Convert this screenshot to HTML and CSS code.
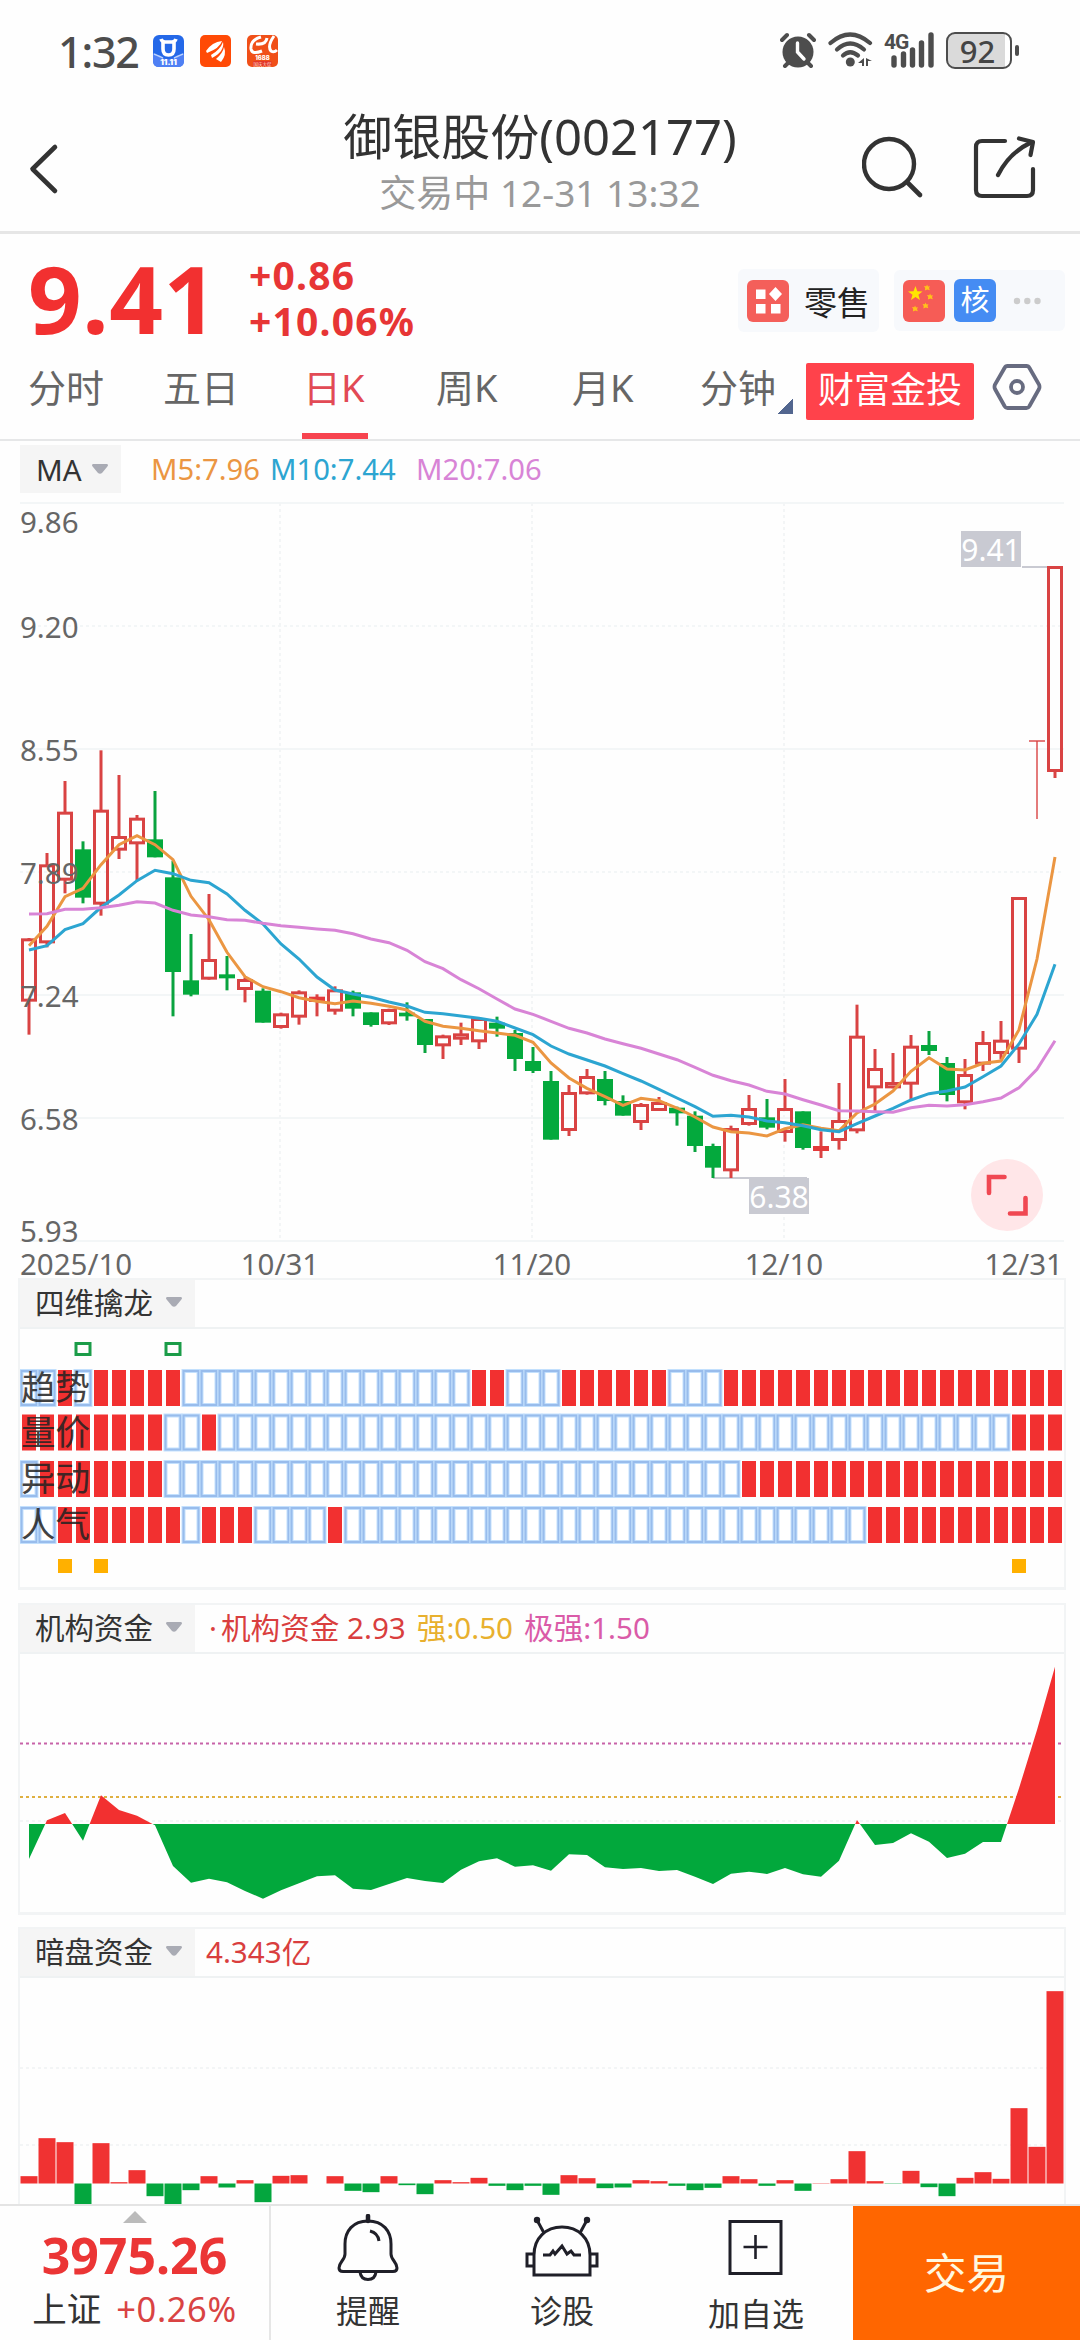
FILE: index.html
```html
<!DOCTYPE html>
<html lang="zh-CN">
<head>
<meta charset="utf-8">
<title>御银股份(002177)</title>
<link rel="stylesheet" href="styles.css">
</head>
<body>
<div class="status">
  <span class="clock">1:32</span>
  <div class="apps">
    <svg width="31" height="32" viewBox="0 0 31 32"><rect width="31" height="32" rx="6" fill="#2468e8"/><path d="M0 18Q8 24 15.500 24T31 18V26Q31 32 25 32H6Q0 32 0 26Z" fill="#4f80f4"/><path d="M1 19Q8 22 10 23M30 19Q23 22 21 23" stroke="#bcd3ff" stroke-width="1.500" fill="none"/><path d="M8 4Q9 7 12 7H19Q22 7 23 4M10 7V14Q10 20 15.500 20T21 14V7" stroke="#fff" stroke-width="3.600" fill="none"/><text x="15.500" y="30" class="app-a">11.11</text></svg>
    <svg width="31" height="32" viewBox="0 0 31 32"><rect width="31" height="32" rx="5" fill="#ff4a06"/><path d="M6 16Q12 7 22 6Q20 13 7 18ZM11 20Q20 15 23 7Q25 16 12 23ZM16 24Q23 18 24 12Q27 20 21 27Z" fill="#fff"/></svg>
    <svg width="31" height="32" viewBox="0 0 31 32"><rect width="31" height="32" rx="5" fill="#f04f18"/><path d="M14 2Q3 5 4 14Q5 20 15 16M9 9Q19 10 20 3M27 1Q20 11 24 16Q27 18 30 15" stroke="#fff" stroke-width="3" fill="none"/><text x="15.500" y="24.500" class="app-b">1688</text><rect x="6" y="26" width="19" height="5" rx="2" fill="#e2372b"/><text x="15.500" y="30.500" class="app-c">国庆大促</text></svg>
  </div>
  <svg class="alarm" width="36" height="36" viewBox="0 0 36 36"><circle cx="18" cy="20" r="15.500" fill="#4d4d4d"/><path d="M2 8L7 3M34 8L29 3M5 34L9 30M31 34L27 30" stroke="#4d4d4d" stroke-width="4" stroke-linecap="round"/><path d="M17.500 11V20L24 27" fill="none" stroke="#fff" stroke-width="3.400" stroke-linecap="round"/></svg>
  <svg class="wifi" width="46" height="36" viewBox="0 0 46 36"><g fill="none" stroke="#4d4d4d" stroke-width="4.200" stroke-linecap="round"><path d="M2.500 11Q22 -6 42 11"/><path d="M9 17.500Q22 5.500 36 17.500"/><path d="M15 23.500Q22 17 30 23.500"/></g><circle cx="22.300" cy="30" r="4.500" fill="#4d4d4d"/><path d="M36 26V34H34V31H30ZM38 26L44 29H40V34H38Z" fill="#4d4d4d"/></svg>
  <svg class="signal" width="52" height="37" viewBox="0 0 52 37"><text x="0" y="18" class="net">4G</text><path d="M10 34V27M19.500 34V23M28.500 34V19M37.500 34V12M47 34V4" stroke="#4d4d4d" stroke-width="5.400" stroke-linecap="round"/></svg>
  <div class="battery"><span>92</span></div><i class="nub"></i>
</div>
<header class="head">
  <svg class="back" width="30" height="54" viewBox="0 0 30 54"><path d="M26 5L3.500 27L26 49" fill="none" stroke="#333" stroke-width="4.600" stroke-linecap="round" stroke-linejoin="round"/></svg>
  <div class="heading"><h1>御银股份(002177)</h1><p>交易中 12-31 13:32</p></div>
  <svg class="search" width="62" height="64" viewBox="0 0 62 64"><circle cx="27" cy="28" r="25" fill="none" stroke="#333" stroke-width="4.400"/><path d="M45 46L58 59" stroke="#333" stroke-width="4.600" stroke-linecap="round"/></svg>
  <svg class="share" width="64" height="66" viewBox="0 0 64 66"><g fill="none" stroke="#333" stroke-width="4.200" stroke-linecap="round" stroke-linejoin="round"><path d="M32 6H9Q3 6 3 12V55Q3 61 9 61H54Q60 61 60 55V34"/><path d="M25 40Q36 18 57 8"/><path d="M46 3.500L60 7L57.500 20"/></g></svg>
</header>
<section class="quote">
  <strong class="price">9.41</strong>
  <div class="delta"><b>+0.86</b><b>+10.06%</b></div>
  <div class="chip chip-a"><svg width="42" height="42" viewBox="0 0 42 42"><rect width="42" height="42" rx="6" fill="#f45f5a"/><path d="M9 9.500h9.500v9.500H9zM9 24h9.500v9.500H9zM24 24h9.500v9.500H24zM28.500 7l6.500 7-6.500 7-6.500-7z" fill="#fff"/></svg><span>零售</span></div>
  <div class="chip chip-b"><svg width="42" height="42" viewBox="0 0 42 42"><rect width="42" height="42" rx="6" fill="#f65c56"/><g fill="#ffe600"><path d="M12.500 6l1.800 5.200 5.200.2-4.100 3.300 1.500 5.300-4.400-3.100L8 20l1.500-5.300L5 11.400l5.500-.2z"/></g><g fill="#ffc21a"><path id="s" d="M24 4.500l1 2 2-.3-1 1.800.8 2.200L24.300 9.500l-2.400.9.300-2.500-1.200-1.800 2.300.1z"/><use href="#s" x="3" y="9"/><use href="#s" x="-1.500" y="18"/><use href="#s" x="-12" y="21"/></g></svg><em>核</em><svg class="dots" width="28" height="8" viewBox="0 0 28 8"><g fill="#ccc"><circle cx="4" cy="4" r="3.200"/><circle cx="14.300" cy="4" r="3.200"/><circle cx="24.500" cy="4" r="3.200"/></g></svg></div>
</section>
<nav class="tabs">
  <a class="t1">分时</a><a class="t2">五日</a><a class="t3 on">日K</a><a class="t4">周K</a><a class="t5">月K</a><a class="t6">分钟</a><i class="corner"></i>
  <button class="promo">财富金投</button>
  <svg width="50" height="48" viewBox="0 0 50 48"><path d="M15.500 3H34.500Q36.500 3 37.500 5L47 21.500Q48 24 47 26L37.500 43Q36.500 45 34.500 45H15.500Q13.500 45 12.500 43L3 26Q2 24 3 21.500L12.500 5Q13.500 3 15.500 3Z" fill="none" stroke="#676b80" stroke-width="3.800"/><circle cx="25" cy="24" r="6" fill="none" stroke="#676b80" stroke-width="3.800"/></svg>
</nav>
<div class="ma">
  <div class="pick">MA<svg width="16" height="10" viewBox="0 0 16 10"><path d="M1 0H15Q17 1 15 3L10 9Q8 10.500 6 9L1 3Q-1 1 1 0Z" fill="#a9abb4"/></svg></div>
  <span class="m5">M5:7.96</span><span class="m10">M10:7.44</span><span class="m20">M20:7.06</span>
</div>
<svg class="kline" id="kline" width="1080" height="785" viewBox="0 494 1080 785"></svg>
<section class="panel p1">
  <div class="bar"><div class="pick">四维擒龙<svg width="16" height="10" viewBox="0 0 16 10"><path d="M1 0H15Q17 1 15 3L10 9Q8 10.500 6 9L1 3Q-1 1 1 0Z" fill="#a9abb4"/></svg></div></div>
  <svg id="dragon" width="1044" height="259" viewBox="20 1330 1044 259"></svg>
</section>
<section class="panel p2">
  <div class="bar"><div class="pick">机构资金<svg width="16" height="10" viewBox="0 0 16 10"><path d="M1 0H15Q17 1 15 3L10 9Q8 10.500 6 9L1 3Q-1 1 1 0Z" fill="#a9abb4"/></svg></div><span class="v-red"><i class="pt">·</i>机构资金 2.93</span><span class="v-gold">强:0.50</span><span class="v-pink">极强:1.50</span></div>
  <svg id="fund" width="1044" height="259" viewBox="20 1654 1044 259"></svg>
</section>
<section class="panel p3">
  <div class="bar"><div class="pick">暗盘资金<svg width="16" height="10" viewBox="0 0 16 10"><path d="M1 0H15Q17 1 15 3L10 9Q8 10.500 6 9L1 3Q-1 1 1 0Z" fill="#a9abb4"/></svg></div><span class="v-red dark">4.343亿</span></div>
  <svg id="dark" width="1044" height="226" viewBox="20 1978 1044 226"></svg>
</section>
<footer class="foot">
  <div class="index"><i class="up"></i><strong>3975.26</strong><p>上证<span>+0.26%</span></p></div>
  <div class="act"><svg width="64" height="68" viewBox="0 0 64 68"><g fill="none" stroke="#1f1f28" stroke-width="3" stroke-linejoin="round"><path d="M32 7C17 7 9 17 9 30V40C9 46 3 48 3 54Q3 57.500 7 57.500H57Q61 57.500 61 54C61 48 55 46 55 40V30C55 17 47 7 32 7Z"/><path d="M24 58Q25 65.500 32 65.500T40 58"/><path d="M32 2V7" stroke-width="4.500" stroke-linecap="round"/><path d="M34 17Q42 19 43 27"/></g></svg><span>提醒</span></div>
  <div class="act"><svg width="74" height="68" viewBox="0 0 74 68"><g fill="none" stroke="#1f1f28" stroke-width="3"><path d="M9 61V41C9 24 21 13 37 13S65 24 65 41V61Z"/><path d="M9 40H2V52H9M65 40H72V52H65M19 19L12 6M55 19L62 6"/><path d="M18 41H25L28 37L30 40L37 32L42 40L46 37L49 41H56"/></g><circle cx="12" cy="6" r="3.200" fill="#1f1f28"/><circle cx="62" cy="6" r="3.200" fill="#1f1f28"/></svg><span>诊股</span></div>
  <div class="act add"><svg width="56" height="68" viewBox="0 0 56 68"><path d="M2 7.500H53V59.500H2Z" fill="none" stroke="#1f1f28" stroke-width="3"/><path d="M27.500 21V45M15.500 33H39.500" stroke="#1f1f28" stroke-width="2.600"/></svg><span>加自选</span></div>
  <div class="trade">交易</div>
</footer>
<script src="charts.js"></script>
</body>
</html>
```
FILE: styles.css
```css
* { box-sizing: border-box; margin: 0; padding: 0; }
body {
  width: 1080px; height: 2340px; overflow: hidden;
  display: flex; flex-direction: column;
  background: #fefefe; color: #333;
  font-family: "Noto Sans", "Noto Sans CJK SC", sans-serif;
}
svg { display: block; flex: none; }
i, em { font-style: normal; }
.status { height: 100px; display: flex; align-items: center; padding-left: 58px; }
.clock { font-size: 43px; font-weight: 500; color: #4d4d4d; width: 95px; height: 60px; line-height: 60px; letter-spacing: -1.2px; margin-top: 4px; }
.apps { display: flex; gap: 16px; margin-top: 2px; }
.app-a { font: 900 8px Inter, sans-serif; fill: #fff; text-anchor: middle; }
.app-b { font: 800 6px Inter, sans-serif; fill: #fff; text-anchor: middle; }
.app-c { font: 4.500px "Noto Sans CJK SC", sans-serif; fill: #ffd9c5; text-anchor: middle; }
.alarm { margin-left: 502px; }
.wifi { margin-left: 12px; }
.signal { margin-left: 10px; overflow: visible; }
.net { font: 700 21px Roboto, sans-serif; fill: #4d4d4d; letter-spacing: -1px; }
.battery {
  width: 66px; height: 37px; margin: 2px 0 0 10px; border: 2.500px solid #4d4d4d; border-radius: 9px;
  background: linear-gradient(90deg, #dadada 92%, #fff 92%);
  display: flex; align-items: center; justify-content: center;
  font-size: 31px; font-weight: 500; color: #444; padding-right: 3px; line-height: 30px;
}
.nub { width: 4px; height: 11px; margin: 2px 0 0 3px; border-radius: 2px; background: #4d4d4d; }
.head { height: 135px; border-bottom: 3px solid #e6e6e6; display: flex; align-items: center; padding-left: 29px; }
.back { margin-top: 8px; }
.heading { width: 640px; margin: -4px 0 0 161px; text-align: center; white-space: nowrap; }
h1 { font-size: 49px; line-height: 60px; font-weight: 400; }
.heading p { font-size: 37px; line-height: 54px; color: #999; }
.search { margin: 6px 0 0 2px; }
.share { margin: 5px 0 0 49px; }
.quote { height: 115px; display: flex; align-items: flex-start; color: #f23030; }
.price { width: 218px; padding-left: 28px; font-size: 94px; line-height: 128px; letter-spacing: .5px; }
.delta { width: 520px; padding: 18px 0 0 31px; display: flex; flex-direction: column; font-size: 39px; line-height: 46px; letter-spacing: 1.2px; color: #e73535; }
.chip { display: flex; align-items: center; border-radius: 6px; background: #f7f9fc; color: #222; height: 63px; margin-top: 35px; }
.chip-a { width: 141px; padding-left: 9px; gap: 15px; font-size: 33px; }
.chip-b { width: 171px; height: 61px; margin: 36px 0 0 15px; padding-left: 9px; }
.chip em { width: 42px; height: 43px; margin-left: 9px; border-radius: 6px; background: #458cf3; color: #fff; font-size: 29px; line-height: 41px; text-align: center; }
.dots { margin-left: 17px; }
.tabs { height: 92px; border-bottom: 2px solid #e6e7e8; display: flex; align-items: flex-start; padding: 0 0 0 28px; font-size: 38px; color: #666; }
.tabs a { height: 90px; line-height: 76px; white-space: nowrap; }
.t1 { width: 135px; }
.t2 { width: 139px; }
.on { width: 66px; margin-right: 68px; padding-left: 1px; color: #e24a55; border-bottom: 6px solid #f7444f; }
.t4 { width: 136px; }
.t5 { width: 128px; }
.t6 { width: 78px; }
.corner { width: 15px; height: 15px; margin: 50px 13px 0 0; background: linear-gradient(135deg, transparent 50%, #52668f 50%); }
.promo { width: 168px; height: 57px; margin: 14px 18px 0 0; border: 0; border-radius: 2px; background: #ff424b; color: #fff; font: 36px/48px "Noto Sans CJK SC", sans-serif; padding-bottom: 9px; }
.tabs > svg { margin-top: 14px; }
.ma { height: 52px; padding: 4px 0 0 20px; display: flex; align-items: center; font-size: 29.200px; white-space: nowrap; }
.pick { display: flex; align-items: center; justify-content: space-between; height: 48px; padding: 0 13px 0 16px; background: #f5f5f5; color: #333; font-size: 29.500px; }
.ma .pick { width: 101px; }
.m5 { width: 119px; margin-left: 30px; color: #eb9642; }
.m10 { width: 146px; color: #2ca5d1; }
.m20 { color: #d884d6; }
.kline { overflow: visible; }
.panel { width: 1048px; margin-left: 18px; border: 2px solid #f2f4f5; border-bottom-width: 3px; }
.p1 { height: 312px; margin-bottom: 13px; }
.p2 { height: 312px; margin-bottom: 12px; }
.p3 { height: 277px; border-bottom: 0; }
.bar { height: 49px; border-bottom: 2px solid #eff2f3; display: flex; align-items: center; font-size: 29.600px; white-space: nowrap; padding-bottom: 0; }
.bar .pick { width: 175px; height: 47px; padding: 0 13px 4px 15px; }
.bar > span { padding-bottom: 4px; }
.v-red { margin-left: 14px; color: #d93e3e; }
.pt { display: inline-block; width: 12px; }
.v-gold { margin-left: 11px; color: #e8b02e; }
.v-pink { margin-left: 11px; color: #da5ba8; }
.bar > .dark { margin-left: 11px; }
.foot { height: 136px; border-top: 2px solid #e4e4e4; display: flex; background: #fefefe; }
.index { width: 271px; border-right: 2px solid #e6e6e6; display: flex; flex-direction: column; align-items: center; }
.up { border: 12px solid transparent; border-top: 0; border-bottom: 12px solid #bbb; margin-top: 5px; }
.index strong { font-size: 50px; line-height: 60px; margin-top: 2px; color: #eb3535; }
.index p { font-size: 34.500px; line-height: 44px; margin-top: 2px; color: #333; }
.index span { color: #d94343; margin-left: 15px; letter-spacing: .6px; }
.act { width: 194px; display: flex; flex-direction: column; align-items: center; padding-top: 8px; font-size: 32px; line-height: 48px; color: #333; }
.act span { margin-top: 5px; }
.add span { margin-top: 8px; }
.trade { flex: 1; background: #ff6600; color: #fff8e0; font-size: 42.500px; line-height: 134px; text-align: center; }
.ax { font-size: 29.500px; fill: #666; }
.tag { font-size: 30px; fill: #fff; text-anchor: middle; }
.mid { text-anchor: middle; }
.end { text-anchor: end; }
.row { font-size: 34.500px; fill: #222; opacity: .85; }
```
FILE: charts.js
```js
const X = i => 29 + 18 * i;
const RED = '#d94343', GREEN = '#0aa33f';
const rect = (x, y, w, h, f, extra = '') => `<rect x="${x}" y="${y}" width="${w}" height="${h}" fill="${f}" ${extra}/>`;
const seg = (x1, y1, x2, y2, c, w, extra = '') => `<path d="M${x1} ${y1}L${x2} ${y2}" stroke="${c}" stroke-width="${w}" fill="none" ${extra}/>`;
const text = (x, y, c, s) => `<text x="${x}" y="${y}" class="${c}">${s}</text>`;

// Each session: kind, high, body top, body bottom, low (thirds of a pixel below the block's base)
const blocks = [
  [700, 'r717,718,908,1007 r462,496,733,745 r246,338,545,583 g427,451,596,613 r154,332,617,650 r228,411,455,480 r348,356,436,545 g276,421,475,475 g485,535,819,952 g705,844,887,892 r585,780,842,842 g771,826,838,874 r835,840,873,910 g868,875,971,971 r941,943,987,989 r874,877,956,977 r886,893,909,952 r862,871,938,947 g875,880,929,952 g940,940,978,983'],
  [920, 'r269,270,316,318 g250,281,292,305 g300,300,378,402 r347,349,382,420 r311,343,362,378 r296,297,370,390 g293,311,329,353 g333,342,420,456 g384,426,456,462 g456,486,662,662 r498,519,636,651 r450,471,526,527 g456,480,546,559 g529,546,590,590 r552,555,612,633 r534,549,576,576 g563,566,583,620 g577,590,681,699 g674,681,746,777 r620,627,757,777'],
  [940, 'r468,507,558,560 g480,535,566,571 r420,507,582,608 g517,517,627,632 r577,621,636,657 r432,543,606,632 r197,290,577,583 r330,387,448,517 r342,429,448,448 r288,320,437,482 g276,318,336,348 g354,372,468,487 r360,405,493,511 r276,309,377,396 r246,302,345,362 r-126,-126,332,372']
];
const lines = [
  ['#eb9642', [[700, [740,682,593,568,497,437,410,437,482,592,662,760,833,863,878,896,907,914,906]], [920, [253,262,273,307,322,328,335,342,349,370,432,477,508,533,559,538,545,567,594,624,638]], [940, [582,591,569,557,568,575,522,495,456,397,356,390,393,373,366,272,60,-246]]]],
  ['#2ca5d1', [[700, [753,740,692,674,625,588,545,514,524,544,551,585,634,675,735,780,834,873,885]], [920, [235,249,261,280,284,291,298,307,327,347,381,405,423,441,464,486,511,537,563,592,589]], [940, [534,546,551,560,572,578,554,531,508,483,464,456,444,413,381,315,226,76]]]],
  ['#d884d6', [[700, [645,644,631,631,626,619,608,612,634,648,653,662,664,673,680,685,690,694,704]], [920, [60,71,94,128,149,182,209,240,270,286,307,328,342,360,374,388,405,422,445,469,485]], [940, [438,457,465,482,498,515,516,518,520,506,499,501,497,488,477,446,391,305]]]]
];

let out = '';
[504, 627, 750, 873, 996, 1119, 1242].forEach((y, i) => {
  out += seg(20, y, 1064, y, '#f3f6f7', 2, i === 3 || i === 1 ? 'stroke-dasharray="3 3"' : '');
});
[280, 532, 784].forEach(x => { out += seg(x, 504, x, 1242, '#f3f5f6', 2, 'stroke-dasharray="3 3"'); });
out += seg(713, 1179, 807, 1179, '#c9cad2', 2) + seg(1022, 568, 1050, 568, '#c9cad2', 2);
let n = 0;
blocks.forEach(([base, list]) => list.split(' ').forEach(s => {
  const red = s[0] === 'r';
  const [hi, top, bot, lo] = s.slice(1).split(',').map(v => base + v / 3);
  const c = red ? RED : GREEN, x = X(n++);
  out += seg(x, hi, x, top + 1, c, 3) + seg(x, bot - 1, x, lo, c, 3);
  out += red && bot - top > 6 ? rect(x - 6.5, top + 1.5, 13, bot - top - 3, 'none', `stroke="${c}" stroke-width="3"`)
    : rect(x - 8, top, 16, bot - top, red ? '#e33a3a' : '#04a93d');
}));
out += seg(1029, 742, 1045, 742, RED, 1.4) + seg(1037, 742, 1037, 820, RED, 1.4);
out += rect(1048.5, 568.5, 13, 203, 'none', `stroke="${RED}" stroke-width="3"`) + seg(1055, 772, 1055, 779, RED, 3);
lines.forEach(([c, parts]) => {
  const pts = parts.flatMap(([b, ys]) => ys.map(y => b + y / 3)).map((y, i) => `${X(i)},${y.toFixed(1)}`);
  out += `<polyline points="${pts.join(' ')}" fill="none" stroke="${c}" stroke-width="3"/>`;
});
[['9.86', 534], ['9.20', 639], ['8.55', 762], ['7.89', 885], ['7.24', 1008], ['6.58', 1131], ['5.93', 1243]].forEach(([s, y]) => { out += text(20, y, 'ax', s); });
out += text(20, 1276, 'ax', '2025/10') + text(280, 1276, 'ax mid', '10/31') + text(532, 1276, 'ax mid', '11/20') + text(784, 1276, 'ax mid', '12/10') + text(1063, 1276, 'ax end', '12/31');
out += rect(749, 1179, 60, 36, '#c9cad2') + text(779, 1209, 'tag', '6.38');
out += rect(961, 532, 60, 36, '#c9cad2') + text(991, 562, 'tag', '9.41');
out += '<circle cx="1007" cy="1196" r="36" fill="#ffe6e8"/><path d="M1004.500 1178H989V1194M1025.500 1199V1214.500H1010" fill="none" stroke="#f04852" stroke-width="4.600" stroke-linecap="round"/>';
document.getElementById('kline').innerHTML = out;

// Four-signal strip: ranges of active sessions in each row
out = '';
[[1371, [[2, 2], [4, 8], [25, 26], [30, 35], [39, 57]], '趋势'],
 [1415.5, [[0, 7], [10, 10], [55, 57]], '量价'],
 [1462, [[1, 7], [40, 57]], '异动'],
 [1508, [[2, 8], [10, 12], [17, 17], [47, 57]], '人气']].forEach(([y, on, name]) => {
  for (let i = 0; i < 58; i++) {
    const x = X(i);
    out += on.some(([a, b]) => i >= a && i <= b) ? rect(x - 7, y, 14, 36, '#f23030')
      : rect(x - 7.5, y + 1, 15, 34, '#fff', 'stroke="#c3e0fd" stroke-width="4"') + rect(x - 7.5, y + 1, 15, 34, 'none', 'stroke="#98bcec" stroke-width="2"');
  }
  out += text(21, y + 30, 'row', name);
});
[3, 8].forEach(i => { out += rect(X(i) - 7, 1344.5, 14, 11, 'none', 'stroke="#1b9c48" stroke-width="3"'); });
[2, 4, 55].forEach(i => { out += rect(X(i) - 7, 1560, 14, 14, '#ffb000'); });
document.getElementById('dragon').innerHTML = out;

const fund = [657,541,519,602,466,510,527,556,678,728,716,727,753,776,751,730,709,706,746,750,732,714,723,729,689,664,655,680,676,692,643,645,682,687,684,693,690,710,732,701,695,702,684,703,710,662,540,615,609,580,605,654,641,606,606,445,270,80];
const area = `M29 1824L${fund.map((v, i) => `${X(i)} ${(1640 + v / 3).toFixed(1)}`).join('L')}L1055 1824Z`;
document.getElementById('fund').innerHTML =
  '<defs><clipPath id="over"><path d="M20 1654H1064V1824H20Z"/></clipPath><clipPath id="under"><path d="M20 1824H1064V1913H20Z"/></clipPath></defs>' +
  seg(20, 1821, 1064, 1821, '#f4f5f6', 2, 'stroke-dasharray="3 3"') +
  seg(20, 1743.5, 1064, 1743.5, '#c763a8', 2, 'stroke-dasharray="3 3"') +
  seg(20, 1797, 1064, 1797, '#dfb040', 2, 'stroke-dasharray="3 3"') +
  `<path d="${area}" fill="#f23030" clip-path="url(#over)"/><path d="${area}" fill="#02a83c" clip-path="url(#under)"/>`;

const dark = [22,136,124,-62,121,4,40,-38,-62,-20,22,-12,10,-56,23,25,0,22,-22,-26,22,-5,-32,10,4,17,-7,-20,-7,-34,25,16,-14,-12,10,7,-7,-20,-13,22,13,-7,10,-22,1,13,97,7,-1,38,-11,-38,17,34,14,226,110,577];
out = seg(20, 2068, 1064, 2068, '#f3f5f6', 2, 'stroke-dasharray="3 3"') + seg(20, 2145, 1064, 2145, '#f3f5f6', 2, 'stroke-dasharray="3 3"');
dark.forEach((v, i) => {
  const h = Math.abs(v) / 3;
  out += rect(X(i) - 8.5, v > 0 ? 2183.5 - h : 2183.5, 17, h, v > 0 ? '#f03232' : '#04a63e');
});
document.getElementById('dark').innerHTML = out;
```
